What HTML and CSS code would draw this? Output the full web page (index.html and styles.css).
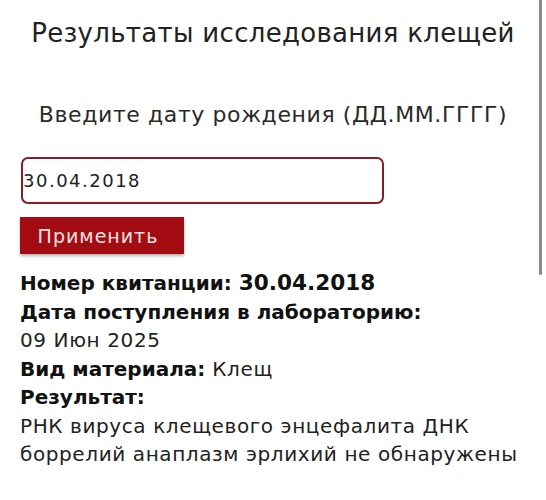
FILE: index.html
```html
<!DOCTYPE html>
<html lang="ru">
<head>
<meta charset="utf-8">
<title>Результаты исследования клещей</title>
<link rel="stylesheet" href="styles.css">
</head>
<body>
<div class="scroll-thumb"></div>
<main class="page">
  <h1 class="title">Результаты исследования клещей</h1>
  <p class="prompt">Введите дату рождения (ДД.ММ.ГГГГ)</p>
  <form class="form">
    <input class="date-input" type="text" value="30.04.2018">
    <button class="apply" type="button">Применить</button>
  </form>
  <div class="result">
    <p class="row"><b>Номер квитанции:</b> <span class="receipt">30.04.2018</span></p>
    <p class="row"><b>Дата поступления в лабораторию:</b></p>
    <p class="row">09 Июн 2025</p>
    <p class="row"><b>Вид материала:</b> Клещ</p>
    <p class="row"><b>Результат:</b></p>
    <p class="row">РНК вируса клещевого энцефалита ДНК боррелий анаплазм эрлихий не обнаружены</p>
  </div>
</main>
</body>
</html>
```

FILE: styles.css
```css
html, body {
  margin: 0;
  background: #ffffff;
}
body {
  font-family: "DejaVu Sans", "Open Sans", sans-serif;
  color: #222222;
  position: relative;
}
.scroll-thumb {
  position: absolute;
  top: 0;
  right: 4px;
  width: 3px;
  height: 275px;
  background: #8c8c8c;
  border-radius: 0 0 2px 2px;
}
.page {
  padding: 18px 20px 0 20px;
}
.title {
  margin: 0;
  font-size: 26px;
  line-height: 30px;
  font-weight: 400;
  letter-spacing: 0.3px;
  text-align: center;
  color: #222222;
}
.prompt {
  margin: 53px 0 0 0;
  font-size: 22px;
  line-height: 28px;
  letter-spacing: 0.6px;
  text-align: center;
  color: #2a2a2a;
}
.form {
  display: flex;
  flex-direction: column;
  align-items: flex-start;
  margin-top: 28px;
}
.date-input {
  box-sizing: border-box;
  margin: 0 0 0 1px;
  width: 363px;
  height: 47px;
  padding: 0;
  border: 2px solid #8c1d25;
  border-radius: 7px;
  font-family: inherit;
  font-size: 18px;
  letter-spacing: 1.5px;
  color: #222222;
  background: #ffffff;
  outline: none;
}
.apply {
  margin-top: 13px;
  width: 164px;
  height: 37px;
  border: none;
  background: #a30c12;
  color: #f6e2e2;
  font-family: inherit;
  font-size: 19px;
  letter-spacing: 1px;
  box-shadow: 0 2px 3px rgba(0, 0, 0, 0.3);
  padding: 0 8px 0 0;
}
.result {
  margin-top: 15px;
}
.row {
  margin: 0;
  font-size: 20px;
  line-height: 28.5px;
  letter-spacing: 0.6px;
}
.row b {
  font-weight: 700;
  color: #111111;
  letter-spacing: 0;
}
.receipt {
  font-weight: 700;
  font-size: 21.6px;
  line-height: 1;
  letter-spacing: 0;
  color: #111111;
}
```
